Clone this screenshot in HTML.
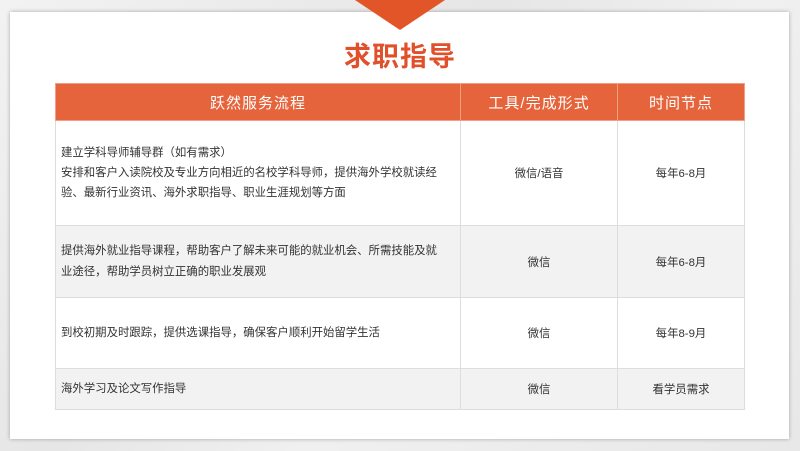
<!DOCTYPE html>
<html><head><meta charset="utf-8"><style>
body{margin:0;width:800px;height:451px;overflow:hidden;background:linear-gradient(135deg,#f2f2f2,#e6e6e6 40%,#f0f0f0 60%,#e8e8e8);font-family:"Liberation Sans","Noto Sans CJK SC",sans-serif;position:relative}
.card{position:absolute;left:10px;top:12px;width:779px;height:427px;background:#fff;box-shadow:0 0 4px rgba(0,0,0,.3)}
.tri{position:absolute;left:355px;top:0;width:0;height:0;border-left:45px solid transparent;border-right:45px solid transparent;border-top:30px solid #e15528}
h1{position:absolute;left:0;width:800px;top:36px;margin:0;text-align:center;color:#e0502a;font-size:27px;font-weight:bold;letter-spacing:1px;font-family:"Noto Sans CJK SC",sans-serif;line-height:38px}
table{position:absolute;left:55px;top:83px;border-collapse:collapse;width:690px;font-size:11.4px;color:#333}
td,th{border:1px solid #ddd;padding:0}
th{background:#e5643c;color:#fff;font-weight:normal;font-size:15px;height:36px;letter-spacing:1px;border-color:#f0a080}
td.c{text-align:center}
td.l{padding-left:5px;padding-right:18px;line-height:20px}
tr.g td{background:#f2f2f2}
</style></head><body>
<div class="card"></div>
<div class="tri"></div>
<h1>求职指导</h1>
<table>
<tr><th style="width:404px">跃然服务流程</th><th style="width:156px">工具/完成形式</th><th>时间节点</th></tr>
<tr style="height:105px"><td class="l">建立学科导师辅导群（如有需求）<br>安排和客户入读院校及专业方向相近的名校学科导师，提供海外学校就读经验、最新行业资讯、海外求职指导、职业生涯规划等方面</td><td class="c">微信/语音</td><td class="c">每年6-8月</td></tr>
<tr class="g" style="height:72px"><td class="l" style="line-height:21px">提供海外就业指导课程，帮助客户了解未来可能的就业机会、所需技能及就业途径，帮助学员树立正确的职业发展观</td><td class="c">微信</td><td class="c">每年6-8月</td></tr>
<tr style="height:71px"><td class="l">到校初期及时跟踪，提供选课指导，确保客户顺利开始留学生活</td><td class="c">微信</td><td class="c">每年8-9月</td></tr>
<tr class="g" style="height:41px"><td class="l">海外学习及论文写作指导</td><td class="c">微信</td><td class="c">看学员需求</td></tr>
</table>
</body></html>
